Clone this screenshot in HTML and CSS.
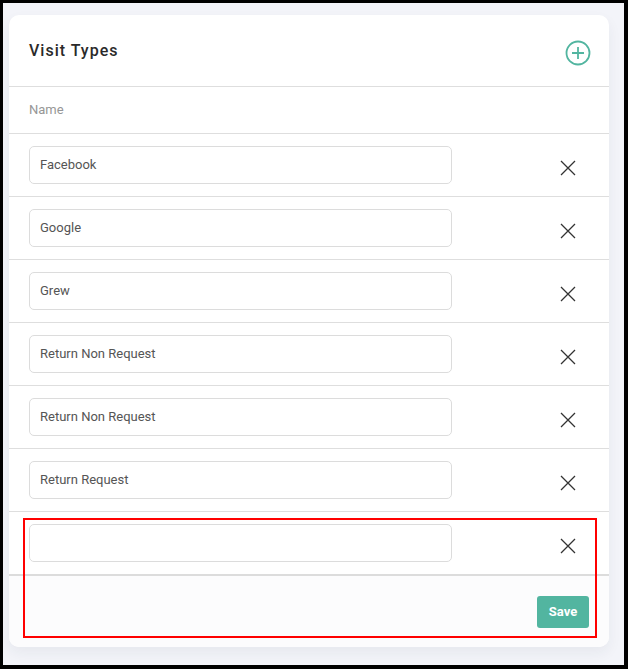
FILE: index.html
```html
<!DOCTYPE html>
<html lang="en">
<head>
    <meta charset="UTF-8">
    <meta name="viewport" content="width=device-width, initial-scale=1.0">
    <title>Visit Types</title>
    <link rel="stylesheet" href="styles.css">
</head>
<body>
    <div class="frame">
        <div class="card">
            <div class="card-header">
                <h2>Visit Types</h2>
                <button class="add-button" aria-label="Add">
                    <svg width="26" height="26" viewBox="0 0 26 26" fill="none" stroke="#52b5a0">
                        <circle cx="13" cy="13" r="11.5" stroke-width="1.8"/>
                        <path d="M13 7v12M7 13h12" stroke-width="1.8"/>
                    </svg>
                </button>
            </div>
            <div class="table-head">Name</div>

            <div class="row">
                <input type="text" value="Facebook">
                <button class="remove-button" aria-label="Remove">
                    <svg width="16" height="16" viewBox="0 0 16 16" fill="none" stroke="#333" stroke-width="1.3"><path d="M1 1l14 14M15 1L1 15"/></svg>
                </button>
            </div>
            <div class="row">
                <input type="text" value="Google">
                <button class="remove-button" aria-label="Remove">
                    <svg width="16" height="16" viewBox="0 0 16 16" fill="none" stroke="#333" stroke-width="1.3"><path d="M1 1l14 14M15 1L1 15"/></svg>
                </button>
            </div>
            <div class="row">
                <input type="text" value="Grew">
                <button class="remove-button" aria-label="Remove">
                    <svg width="16" height="16" viewBox="0 0 16 16" fill="none" stroke="#333" stroke-width="1.3"><path d="M1 1l14 14M15 1L1 15"/></svg>
                </button>
            </div>
            <div class="row">
                <input type="text" value="Return Non Request">
                <button class="remove-button" aria-label="Remove">
                    <svg width="16" height="16" viewBox="0 0 16 16" fill="none" stroke="#333" stroke-width="1.3"><path d="M1 1l14 14M15 1L1 15"/></svg>
                </button>
            </div>
            <div class="row">
                <input type="text" value="Return Non Request">
                <button class="remove-button" aria-label="Remove">
                    <svg width="16" height="16" viewBox="0 0 16 16" fill="none" stroke="#333" stroke-width="1.3"><path d="M1 1l14 14M15 1L1 15"/></svg>
                </button>
            </div>
            <div class="row">
                <input type="text" value="Return Request">
                <button class="remove-button" aria-label="Remove">
                    <svg width="16" height="16" viewBox="0 0 16 16" fill="none" stroke="#333" stroke-width="1.3"><path d="M1 1l14 14M15 1L1 15"/></svg>
                </button>
            </div>
            <div class="row row-last">
                <input type="text" value="">
                <button class="remove-button" aria-label="Remove">
                    <svg width="16" height="16" viewBox="0 0 16 16" fill="none" stroke="#333" stroke-width="1.3"><path d="M1 1l14 14M15 1L1 15"/></svg>
                </button>
            </div>

            <div class="card-footer">
                <button class="save-button">Save</button>
            </div>
        </div>
        <div class="highlight"></div>
    </div>
</body>
</html>
```

FILE: styles.css
```css
* {
    box-sizing: border-box;
}
body {
    font-family: Roboto, Arial, sans-serif;
    margin: 0;
    background: #000;
}
button {
    font-family: inherit;
    border: none;
    background: none;
    padding: 0;
    cursor: pointer;
}
.frame {
    position: relative;
    width: 628px;
    height: 669px;
    border-style: solid;
    border-color: #000;
    border-width: 3px 4px 4px 3px;
    background: #f3f4f9;
    padding: 12px 15px 0 6px;
}
.card {
    background: #fff;
    border-radius: 10px;
    box-shadow: 0 6px 14px rgba(40, 45, 70, 0.06);
    height: 632px;
    overflow: hidden;
}
.card-header {
    height: 72px;
    padding: 0 18px 0 20px;
    display: flex;
    justify-content: space-between;
    align-items: center;
    border-bottom: 1px solid #dedede;
}
.card-header h2 {
    margin: 0 0 1px;
    font-size: 16px;
    font-weight: 500;
    letter-spacing: 1px;
    color: #2a2a2a;
}
.add-button {
    display: flex;
    margin-top: 5px;
}
.table-head {
    height: 47px;
    padding: 0 20px 2px;
    display: flex;
    align-items: center;
    font-size: 13px;
    color: #969696;
    border-bottom: 1px solid #dedede;
}
.row {
    height: 63px;
    padding: 12px 33px 0 20px;
    display: flex;
    justify-content: space-between;
    border-bottom: 1px solid #dedede;
}
.row-last {
    height: 64px;
    border-bottom: 2px solid #dcdcdc;
}
.row input {
    width: 423px;
    height: 38px;
    padding: 0 10px 1px;
    border: 1px solid #dcdcdc;
    border-radius: 5px;
    font-family: inherit;
    font-size: 13px;
    color: #555;
    outline: none;
}
.remove-button {
    display: flex;
    margin-top: 14px;
    align-self: flex-start;
}
.card-footer {
    height: 72px;
    padding: 20px 20px 0;
    display: flex;
    justify-content: flex-end;
    background: #fcfcfd;
}
.save-button {
    width: 52px;
    height: 32px;
    padding-bottom: 2px;
    background: #52b5a0;
    border-radius: 3px;
    color: #fff;
    font-size: 13px;
    font-weight: 700;
}
.highlight {
    position: absolute;
    left: 20px;
    top: 515px;
    width: 574px;
    height: 120px;
    border: 2px solid #f00;
    pointer-events: none;
}
```
